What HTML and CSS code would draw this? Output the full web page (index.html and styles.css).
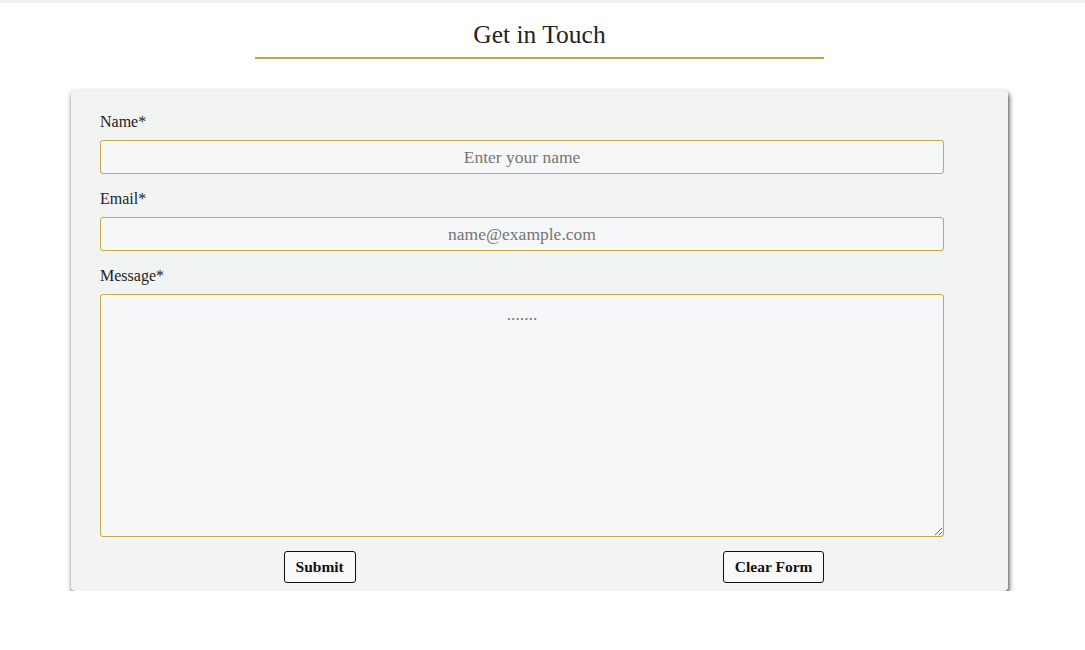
FILE: index.html
```html
<!DOCTYPE html>
<html lang="en">
<head>
<meta charset="utf-8">
<title>Get in Touch</title>
<link rel="stylesheet" href="styles.css">
</head>
<body>
<div class="topbar"></div>
<main class="contact">
  <h1 class="title">Get in Touch</h1>
  <div class="rule"></div>
  <form class="card">
    <label class="label" for="name">Name*</label>
    <input class="field" id="name" type="text" placeholder="Enter your name">
    <label class="label" for="email">Email*</label>
    <input class="field" id="email" type="email" placeholder="name@example.com">
    <label class="label" for="msg">Message*</label>
    <textarea class="field area" id="msg" placeholder="......."></textarea>
    <div class="actions">
      <button type="submit" class="btn">Submit</button>
      <button type="reset" class="btn">Clear Form</button>
    </div>
  </form>
</main>
</body>
</html>
```
FILE: styles.css
```css
html, body {
  margin: 0;
  padding: 0;
  background: #ffffff;
}
body {
  font-family: "Liberation Serif", "DejaVu Serif", serif;
  color: #222;
}
.topbar {
  height: 3px;
  background: #f0f0f0;
}
.contact {
  display: flex;
  flex-direction: column;
  align-items: center;
  padding-right: 6px;
}
.title {
  margin: 18px 0 0;
  font-size: 25.5px;
  font-weight: normal;
  line-height: 28px;
  color: #222;
}
.rule {
  width: 569px;
  height: 2px;
  margin-top: 8px;
  background: #bba54a;
}
.card {
  box-sizing: border-box;
  width: 937px;
  height: 501px;
  margin-top: 31px;
  padding: 22px 0 8px 29px;
  background: #f2f3f3;
  border-radius: 4px;
  box-shadow: 1px 3px 5px rgba(0,0,0,0.78);
  display: flex;
  flex-direction: column;
}
.label {
  font-size: 16px;
  line-height: 20px;
  margin-bottom: 8px;
  color: #222;
}
.field {
  box-sizing: border-box;
  width: 844px;
  height: 34px;
  margin: 0 0 15px;
  border: 1px solid #c2aa44;
  border-radius: 3px;
  background: #f6f7f8;
  font-family: "Liberation Serif", "DejaVu Serif", serif;
  font-size: 17.5px;
  text-align: center;
  color: #333;
}
.field::placeholder {
  color: #757575;
}
.area {
  height: 243px;
  margin-bottom: 14px;
  padding-top: 9px;
  resize: vertical;
}
.actions {
  display: flex;
  justify-content: space-around;
}
.btn {
  height: 32px;
  padding: 0 11px;
  border: 1px solid #111;
  border-radius: 3px;
  background: #f9f9f9;
  font-family: "Liberation Serif", "DejaVu Serif", serif;
  font-weight: bold;
  font-size: 15.5px;
  color: #111;
}
```
